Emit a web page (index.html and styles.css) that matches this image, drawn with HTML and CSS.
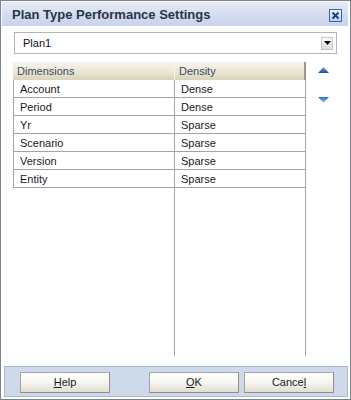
FILE: index.html
```html
<!DOCTYPE html>
<html lang="en">
<head>
    <meta charset="UTF-8">
    <meta name="viewport" content="width=device-width, initial-scale=1.0">
    <title>Plan Type Performance Settings</title>
    <link rel="stylesheet" href="styles.css">
</head>
<body>
    <div class="dialog">
        <div class="titlebar">
            <span class="title">Plan Type Performance Settings</span>
            <span class="close">
                <svg width="13" height="13" viewBox="0 0 13 13">
                    <defs>
                        <linearGradient id="cg" x1="0" y1="0" x2="0" y2="1">
                            <stop offset="0" stop-color="#f4f8ff"/>
                            <stop offset="1" stop-color="#b9cdee"/>
                        </linearGradient>
                    </defs>
                    <rect x="0.5" y="0.5" width="12" height="12" fill="url(#cg)" stroke="#3d63a8"/>
                    <path d="M3.5 3.5 L9.5 9.5 M9.5 3.5 L3.5 9.5" stroke="#1f3f80" stroke-width="2"/>
                </svg>
            </span>
        </div>

        <div class="content">
            <div class="select">
                <span class="select-text">Plan1</span>
                <span class="select-btn">
                    <svg width="7" height="4" viewBox="0 0 7 4"><path d="M0 0 H7 L3.5 4 Z" fill="#000"/></svg>
                </span>
            </div>

            <div class="middle">
                <div class="grid">
                    <div class="row head">
                        <div class="cell">Dimensions</div>
                        <div class="cell">Density</div>
                    </div>
                    <div class="row"><div class="cell">Account</div><div class="cell">Dense</div></div>
                    <div class="row"><div class="cell">Period</div><div class="cell">Dense</div></div>
                    <div class="row"><div class="cell">Yr</div><div class="cell">Sparse</div></div>
                    <div class="row"><div class="cell">Scenario</div><div class="cell">Sparse</div></div>
                    <div class="row"><div class="cell">Version</div><div class="cell">Sparse</div></div>
                    <div class="row"><div class="cell">Entity</div><div class="cell">Sparse</div></div>
                    <div class="filler">
                        <div class="fcell first"></div>
                        <div class="fcell"></div>
                    </div>
                </div>
                <div class="movers">
                    <svg class="up" width="11" height="6" viewBox="0 0 11 6">
                        <defs>
                            <linearGradient id="ug" x1="0" y1="0" x2="0" y2="1">
                                <stop offset="0" stop-color="#6f9fdc"/>
                                <stop offset="1" stop-color="#1d4f9c"/>
                            </linearGradient>
                        </defs>
                        <path d="M5.5 0 L11 6 H0 Z" fill="url(#ug)"/>
                    </svg>
                    <svg class="down" width="11" height="6" viewBox="0 0 11 6">
                        <defs>
                            <linearGradient id="dg" x1="0" y1="0" x2="0" y2="1">
                                <stop offset="0" stop-color="#2f69c0"/>
                                <stop offset="1" stop-color="#a9ccf2"/>
                            </linearGradient>
                        </defs>
                        <path d="M0 0 H11 L5.5 6 Z" fill="url(#dg)"/>
                    </svg>
                </div>
            </div>
        </div>

        <div class="footer">
            <button class="btn help"><u>H</u>elp</button>
            <button class="btn ok"><u>O</u>K</button>
            <button class="btn cancel">Cance<u>l</u></button>
        </div>
    </div>
</body>
</html>
```

FILE: styles.css
```css
/* Reset */
* {
    margin: 0;
    padding: 0;
    box-sizing: border-box;
}

body {
    background: #fff;
    font-family: "Liberation Sans", Arial, sans-serif;
    font-size: 11px;
    color: #1a1a1a;
}

/* Dialog window */
.dialog {
    width: 351px;
    height: 400px;
    border: 1px solid #7d8491;
    padding: 1px 2px 2px 1px;
    display: flex;
    flex-direction: column;
    background: #fff;
}

/* Title bar */
.titlebar {
    height: 24px;
    display: flex;
    align-items: center;
    justify-content: space-between;
    padding: 0 6px 0 10px;
    background: linear-gradient(#e6ebf6, #d2dbee 60%, #c9d3ea);
}

.title {
    font-size: 13px;
    font-weight: bold;
    color: #28344c;
    padding-top: 1px;
}

.close {
    display: flex;
    margin-top: 2px;
}

/* Content area */
.content {
    flex: 1;
    padding: 6px 11px 0 11px;
    display: flex;
    flex-direction: column;
}

.select {
    height: 22px;
    margin-left: 1px;
    border: 1px solid #b5b5b5;
    display: flex;
    align-items: center;
    justify-content: space-between;
    padding: 0 3px 0 8px;
}

.select-text {
    color: #111;
}

.select-btn {
    width: 12px;
    height: 13px;
    border: 1px solid #c8c8c8;
    background: linear-gradient(#fafafa, #dcdcdc);
    display: flex;
    align-items: center;
    justify-content: center;
}

.middle {
    margin-top: 8px;
    display: flex;
    height: 295px;
}

/* Grid */
.grid {
    width: 293px;
    display: flex;
    flex-direction: column;
}

.row {
    display: grid;
    grid-template-columns: 161px 131px;
    height: 18px;
    border-left: 1px solid #a4a4a4;
    border-bottom: 1px solid #a4a4a4;
}

.cell {
    padding-left: 6px;
    display: flex;
    align-items: center;
    border-right: 1px solid #a4a4a4;
    color: #1a1a1a;
}

.row.head {
    border-left: none;
    border-bottom: none;
    grid-template-columns: 162px 131px;
    background: linear-gradient(#f7f5ec, #e9e5d3 60%, #d9d3bb);
}

.head .cell {
    padding-left: 4px;
    color: #3e4a5c;
    border-right: 1px solid #c7c1aa;
}

.head .cell:first-child {
    border-right: 1px solid #f4f1e6;
}

.head .cell:last-child {
    border-right: 2px solid #9d9886;
}

.filler {
    flex: 1;
    display: grid;
    grid-template-columns: 162px 131px;
    margin-bottom: 1px;
}

.fcell {
    border-right: 1px solid #a4a4a4;
}

/* Move up / down arrows */
.movers {
    width: 33px;
    display: flex;
    flex-direction: column;
    align-items: center;
    padding-top: 5px;
    gap: 24px;
    padding-left: 3px;
}

/* Footer */
.footer {
    margin: 9px 0 0 2px;
    height: 31px;
    border: 1px solid #a9b7cf;
    background: #cedaea;
    display: flex;
    align-items: center;
    padding: 0 0 0 15px;
}

.btn {
    width: 90px;
    height: 21px;
    font-family: "Liberation Sans", Arial, sans-serif;
    font-size: 11px;
    color: #1a1a1a;
    border: 1px solid #a3a3a3;
    border-right-color: #8e8e8e;
    border-bottom-color: #8e8e8e;
    background: linear-gradient(#ffffff, #f6f5ef 50%, #e2ded0);
    margin-top: 1px;
}

.ok {
    margin-left: 39px;
}

.cancel {
    margin-left: 5px;
}
```
